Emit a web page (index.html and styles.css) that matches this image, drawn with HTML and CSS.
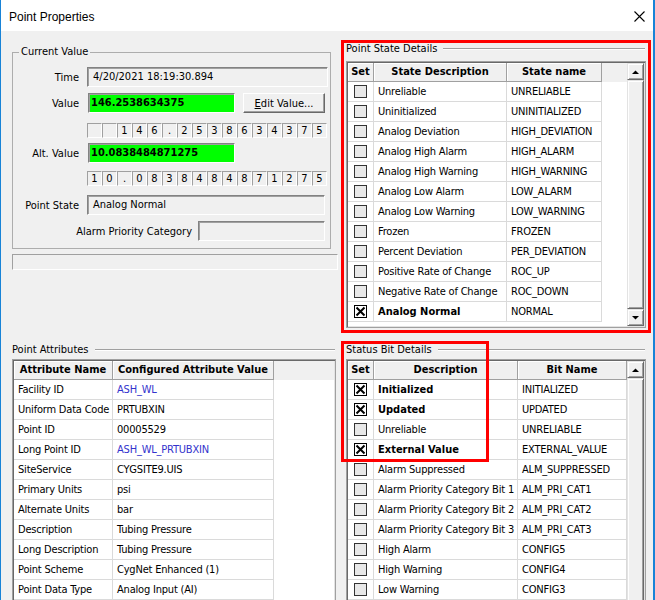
FILE: index.html
```html
<!DOCTYPE html>
<html lang="en">
  <head>
    <meta charset="UTF-8" />
    <title>Point Properties</title>
    <link rel="stylesheet" href="styles.css">
  </head>
  <body>
    <div class="window">
      <div class="titlebar">
        <span class="title">Point Properties</span>
        <svg class="close" width="11" height="11" viewBox="0 0 11 11"><path d="M0.5 0.5L10.5 10.5M10.5 0.5L0.5 10.5" stroke="#000" stroke-width="1.1" fill="none"/></svg>
      </div>

      <div class="content">
        <!-- Current Value -->
        <div class="cell">
          <fieldset class="group">
            <legend>Current Value</legend>
            <div class="field-row">
              <label>Time</label>
              <div class="box readonly w-time">4/20/2021 18:19:30.894</div>
            </div>
            <div class="field-row mt6">
              <label>Value</label>
              <div class="box green">146.2538634375</div>
              <button class="btn"><u>E</u>dit Value...</button>
            </div>
            <div class="digits mt10">
              <span></span><span></span><span>1</span><span>4</span><span>6</span><span>.</span><span>2</span><span>5</span><span>3</span><span>8</span><span>6</span><span>3</span><span>4</span><span>3</span><span>7</span><span>5</span>
            </div>
            <div class="field-row mt5">
              <label>Alt. Value</label>
              <div class="box green">10.0838484871275</div>
            </div>
            <div class="digits mt8">
              <span>1</span><span>0</span><span>.</span><span>0</span><span>8</span><span>3</span><span>8</span><span>4</span><span>8</span><span>4</span><span>8</span><span>7</span><span>1</span><span>2</span><span>7</span><span>5</span>
            </div>
            <div class="field-row mt9">
              <label>Point State</label>
              <div class="box readonly w-state">Analog Normal</div>
            </div>
            <div class="field-row mt6">
              <label class="long">Alarm Priority Category</label>
              <div class="box readonly w-alarm"></div>
            </div>
          </fieldset>
          <div class="statusbar"></div>
        </div>

        <!-- Point State Details -->
        <div class="cell right">
          <div class="group-head"><span class="label">Point State Details</span><span class="rule"></span></div>
          <div class="grid grid-state">
            <div class="tbl">
              <div class="tr th cols-state"><div>Set</div><div>State Description</div><div>State name</div></div>
              <div class="tr cols-state"><div class="set"><span class="chk"></span></div><div>Unreliable</div><div>UNRELIABLE</div></div>
              <div class="tr cols-state"><div class="set"><span class="chk"></span></div><div>Uninitialized</div><div>UNINITIALIZED</div></div>
              <div class="tr cols-state"><div class="set"><span class="chk"></span></div><div>Analog Deviation</div><div>HIGH_DEVIATION</div></div>
              <div class="tr cols-state"><div class="set"><span class="chk"></span></div><div>Analog High Alarm</div><div>HIGH_ALARM</div></div>
              <div class="tr cols-state"><div class="set"><span class="chk"></span></div><div>Analog High Warning</div><div>HIGH_WARNING</div></div>
              <div class="tr cols-state"><div class="set"><span class="chk"></span></div><div>Analog Low Alarm</div><div>LOW_ALARM</div></div>
              <div class="tr cols-state"><div class="set"><span class="chk"></span></div><div>Analog Low Warning</div><div>LOW_WARNING</div></div>
              <div class="tr cols-state"><div class="set"><span class="chk"></span></div><div>Frozen</div><div>FROZEN</div></div>
              <div class="tr cols-state"><div class="set"><span class="chk"></span></div><div>Percent Deviation</div><div>PER_DEVIATION</div></div>
              <div class="tr cols-state"><div class="set"><span class="chk"></span></div><div>Positive Rate of Change</div><div>ROC_UP</div></div>
              <div class="tr cols-state"><div class="set"><span class="chk"></span></div><div>Negative Rate of Change</div><div>ROC_DOWN</div></div>
              <div class="tr cols-state"><div class="set"><span class="chk on"><svg width="11" height="11" viewBox="0 0 11 11"><path d="M1.5 1.5L9.5 9.5M9.5 1.5L1.5 9.5" stroke="#000" stroke-width="2"/></svg></span></div><div class="b">Analog Normal</div><div>NORMAL</div></div>
            </div>
            <div class="vscroll">
              <div class="sb-btn"><svg width="7" height="4" viewBox="0 0 7 4"><path d="M0 4H7L3.5 0.5Z" fill="#000"/></svg></div>
              <div class="sb-thumb"></div>
              <div class="sb-btn"><svg width="7" height="4" viewBox="0 0 7 4"><path d="M0 0H7L3.5 3.5Z" fill="#000"/></svg></div>
            </div>
          </div>
        </div>

        <!-- Point Attributes -->
        <div class="cell bottom">
          <div class="group-head w-attr"><span class="label">Point Attributes</span><span class="rule"></span></div>
          <div class="grid grid-attr">
            <div class="tbl">
              <div class="tr th cols-attr"><div>Attribute Name</div><div>Configured Attribute Value</div></div>
              <div class="tr cols-attr"><div>Facility ID</div><div class="link">ASH_WL</div></div>
              <div class="tr cols-attr"><div>Uniform Data Code</div><div>PRTUBXIN</div></div>
              <div class="tr cols-attr"><div>Point ID</div><div>00005529</div></div>
              <div class="tr cols-attr"><div>Long Point ID</div><div class="link">ASH_WL_PRTUBXIN</div></div>
              <div class="tr cols-attr"><div>SiteService</div><div>CYGSITE9.UIS</div></div>
              <div class="tr cols-attr"><div>Primary Units</div><div>psi</div></div>
              <div class="tr cols-attr"><div>Alternate Units</div><div>bar</div></div>
              <div class="tr cols-attr"><div>Description</div><div>Tubing Pressure</div></div>
              <div class="tr cols-attr"><div>Long Description</div><div>Tubing Pressure</div></div>
              <div class="tr cols-attr"><div>Point Scheme</div><div>CygNet Enhanced (1)</div></div>
              <div class="tr cols-attr"><div>Point Data Type</div><div>Analog Input (AI)</div></div>
            </div>
          </div>
        </div>

        <!-- Status Bit Details -->
        <div class="cell right bottom">
          <div class="group-head"><span class="label">Status Bit Details</span><span class="rule"></span></div>
          <div class="grid grid-bits">
            <div class="tbl">
              <div class="tr th cols-bits"><div>Set</div><div>Description</div><div>Bit Name</div></div>
              <div class="tr cols-bits"><div class="set"><span class="chk on"><svg width="11" height="11" viewBox="0 0 11 11"><path d="M1.5 1.5L9.5 9.5M9.5 1.5L1.5 9.5" stroke="#000" stroke-width="2"/></svg></span></div><div class="b">Initialized</div><div>INITIALIZED</div></div>
              <div class="tr cols-bits"><div class="set"><span class="chk on"><svg width="11" height="11" viewBox="0 0 11 11"><path d="M1.5 1.5L9.5 9.5M9.5 1.5L1.5 9.5" stroke="#000" stroke-width="2"/></svg></span></div><div class="b">Updated</div><div>UPDATED</div></div>
              <div class="tr cols-bits"><div class="set"><span class="chk"></span></div><div>Unreliable</div><div>UNRELIABLE</div></div>
              <div class="tr cols-bits"><div class="set"><span class="chk on"><svg width="11" height="11" viewBox="0 0 11 11"><path d="M1.5 1.5L9.5 9.5M9.5 1.5L1.5 9.5" stroke="#000" stroke-width="2"/></svg></span></div><div class="b">External Value</div><div>EXTERNAL_VALUE</div></div>
              <div class="tr cols-bits"><div class="set"><span class="chk"></span></div><div>Alarm Suppressed</div><div>ALM_SUPPRESSED</div></div>
              <div class="tr cols-bits"><div class="set"><span class="chk"></span></div><div>Alarm Priority Category Bit 1</div><div>ALM_PRI_CAT1</div></div>
              <div class="tr cols-bits"><div class="set"><span class="chk"></span></div><div>Alarm Priority Category Bit 2</div><div>ALM_PRI_CAT2</div></div>
              <div class="tr cols-bits"><div class="set"><span class="chk"></span></div><div>Alarm Priority Category Bit 3</div><div>ALM_PRI_CAT3</div></div>
              <div class="tr cols-bits"><div class="set"><span class="chk"></span></div><div>High Alarm</div><div>CONFIG5</div></div>
              <div class="tr cols-bits"><div class="set"><span class="chk"></span></div><div>High Warning</div><div>CONFIG4</div></div>
              <div class="tr cols-bits"><div class="set"><span class="chk"></span></div><div>Low Warning</div><div>CONFIG3</div></div>
            </div>
            <div class="vscroll">
              <div class="sb-btn"><svg width="7" height="4" viewBox="0 0 7 4"><path d="M0 4H7L3.5 0.5Z" fill="#000"/></svg></div>
              <div class="sb-thumb"></div>
            </div>
          </div>
        </div>
      </div>

      <!-- red annotation boxes -->
      <div class="highlight hl-state"></div>
      <div class="highlight hl-bits"></div>
    </div>
  </body>
</html>
```

FILE: styles.css
```css
body {
  margin: 0;
  padding: 0;
  overflow: hidden;
  background: #fff;
}

.window {
  position: relative;
  width: 655px;
  height: 600px;
  box-sizing: border-box;
  border-left: 1px solid #1883d7;
  border-right: 2px solid #1883d7;
  overflow: hidden;
  font-family: 'DejaVu Sans Condensed', 'Liberation Sans', Arial, sans-serif;
  font-size: 11px;
  color: #000;
}

/* Title bar */
.titlebar {
  height: 31px;
  background: #fff;
  display: flex;
  align-items: center;
  padding: 2px 8px 0 8px;
  box-sizing: border-box;
  font-family: 'Liberation Sans', Arial, sans-serif;
}

.title {
  font-size: 12px;
}

.close {
  margin-left: auto;
  margin-right: 0;
}

/* Main area */
.content {
  height: 569px;
  background: #f0f0f0;
  padding-left: 11px;
  display: grid;
  grid-template-columns: 326px 302px;
  grid-template-rows: 305px 1fr;
  column-gap: 6px;
}

.cell {
  display: flex;
  flex-direction: column;
}

/* Current Value group */
.group {
  margin: 14px 0 0 0;
  width: 319px;
  box-sizing: border-box;
  border: 1px solid #adadad;
  padding: 8px 0 7px 0;
  min-inline-size: 0;
}

.group legend {
  margin-left: 6px;
  padding: 0 2px;
  line-height: 14px;
}

.field-row {
  display: flex;
  align-items: center;
  height: 20px;
}

.field-row label {
  width: 66px;
  margin-right: 8px;
  text-align: right;
}

.field-row label.long {
  width: 179px;
  margin-right: 6px;
}

.mt5 { margin-top: 5px; }
.mt6 { margin-top: 6px; }
.mt8 { margin-top: 8px; }
.mt9 { margin-top: 9px; }
.mt10 { margin-top: 10px; }

.box {
  height: 20px;
  box-sizing: border-box;
  border: 1px solid;
  border-color: #828282 #fff #fff #828282;
  box-shadow: inset 1px 1px 0 #a0a0a0;
  line-height: 18px;
  white-space: nowrap;
}

.readonly {
  background: #f0f0f0;
  padding-left: 5px;
}

.w-time { width: 241px; }
.w-state { width: 238px; }
.w-alarm { width: 127px; }

.green {
  background: #00ff00;
  width: 147px;
  margin-left: 1px;
  padding-left: 2px;
  font-weight: bold;
}

.btn {
  margin-left: 8px;
  width: 82px;
  height: 20px;
  padding: 0;
  font-family: inherit;
  font-size: 11px;
  color: #000;
  background: #f0f0f0;
  border: 1px solid;
  border-color: #fff #696969 #696969 #fff;
  box-shadow: inset -1px -1px 0 #a0a0a0;
}

.digits {
  display: flex;
  padding-left: 74px;
  height: 15px;
}

.digits span {
  width: 15px;
  height: 15px;
  box-sizing: border-box;
  border: 1px solid;
  border-color: #a0a0a0 #fff #fff #a0a0a0;
  text-align: center;
  line-height: 13px;
}

.statusbar {
  margin-top: 5px;
  width: 326px;
  height: 16px;
  box-sizing: border-box;
  border: 1px solid;
  border-color: #a0a0a0 #fff #fff #a0a0a0;
}

/* Line-style group headings */
.group-head {
  display: flex;
  align-items: center;
  height: 14px;
  margin-top: 11px;
}

.cell.bottom .group-head {
  margin-top: 7px;
}

.cell.right .group-head {
  padding-left: 2px;
  width: 301px;
  box-sizing: border-box;
}

.group-head.w-attr {
  width: 323px;
}

.group-head .label {
  line-height: 14px;
  padding-right: 6px;
}

.group-head .rule {
  flex: 1;
  border-top: 1px solid #a0a0a0;
  border-bottom: 1px solid #fff;
}

/* Data grids */
.grid {
  display: flex;
  box-sizing: border-box;
  border: 1px solid #a0a0a0;
  padding: 1px;
  box-shadow: inset 1px 1px 0 #696969, inset -1px -1px 0 #e3e3e3;
  background: #fff;
  margin-top: 5px;
}

.cell.bottom .grid {
  margin-top: 2px;
}

.grid-state {
  margin-left: 2px;
  width: 300px;
  height: 267px;
}

.grid-bits {
  margin-left: 2px;
  width: 300px;
  height: 260px;
}

.grid-attr {
  width: 324px;
  height: 260px;
}

.tbl {
  flex: 1;
  overflow: hidden;
  background: linear-gradient(#f0f0f0 0 19px, #fff 19px);
}

.tr {
  display: grid;
  height: 20px;
}

.cols-state { grid-template-columns: 26px 133px 95px; }
.cols-bits { grid-template-columns: 26px 144px 109px; }
.cols-attr { grid-template-columns: 99px 161px; }

.tr > div {
  border-right: 1px solid #dadada;
  border-bottom: 1px solid #dadada;
  padding: 0 3px 0 4px;
  line-height: 19px;
  letter-spacing: -0.2px;
  white-space: nowrap;
  overflow: hidden;
}

.tr.th {
  height: 19px;
}

.tr.th > div {
  background: #f0f0f0;
  border-color: #a0a0a0;
  box-shadow: inset 1px 1px 0 #fff;
  font-weight: bold;
  text-align: center;
  line-height: 18px;
  letter-spacing: 0;
  padding: 0;
}

.tr > div.set {
  padding: 0;
  display: flex;
  align-items: center;
  justify-content: center;
}

.b {
  font-weight: bold;
}

.tr > div.b {
  letter-spacing: 0;
}

.link {
  color: #3333cc;
}

.chk {
  width: 13px;
  height: 13px;
  box-sizing: border-box;
  border: 1px solid #333;
  background: #e8e8e8;
  display: flex;
}

.chk.on {
  border-color: #000;
  background: #fff;
}

/* Scrollbar */
.vscroll {
  width: 17px;
  display: flex;
  flex-direction: column;
  background: #f0f0f0;
}

.sb-btn,
.sb-thumb {
  box-sizing: border-box;
  border: 1px solid;
  border-color: #e3e3e3 #696969 #696969 #e3e3e3;
  box-shadow: inset 1px 1px 0 #fff, inset -1px -1px 0 #a0a0a0;
  background: #f0f0f0;
}

.sb-btn {
  height: 17px;
  display: flex;
  align-items: center;
  justify-content: center;
}

.sb-thumb {
  flex: 1;
}

/* Annotation boxes */
.highlight {
  position: absolute;
  border: 3px solid #ff0000;
  box-sizing: border-box;
  pointer-events: none;
}

.hl-state {
  left: 340px;
  top: 40px;
  width: 310px;
  height: 293px;
}

.hl-bits {
  left: 340px;
  top: 341px;
  width: 148px;
  height: 121px;
}
```
